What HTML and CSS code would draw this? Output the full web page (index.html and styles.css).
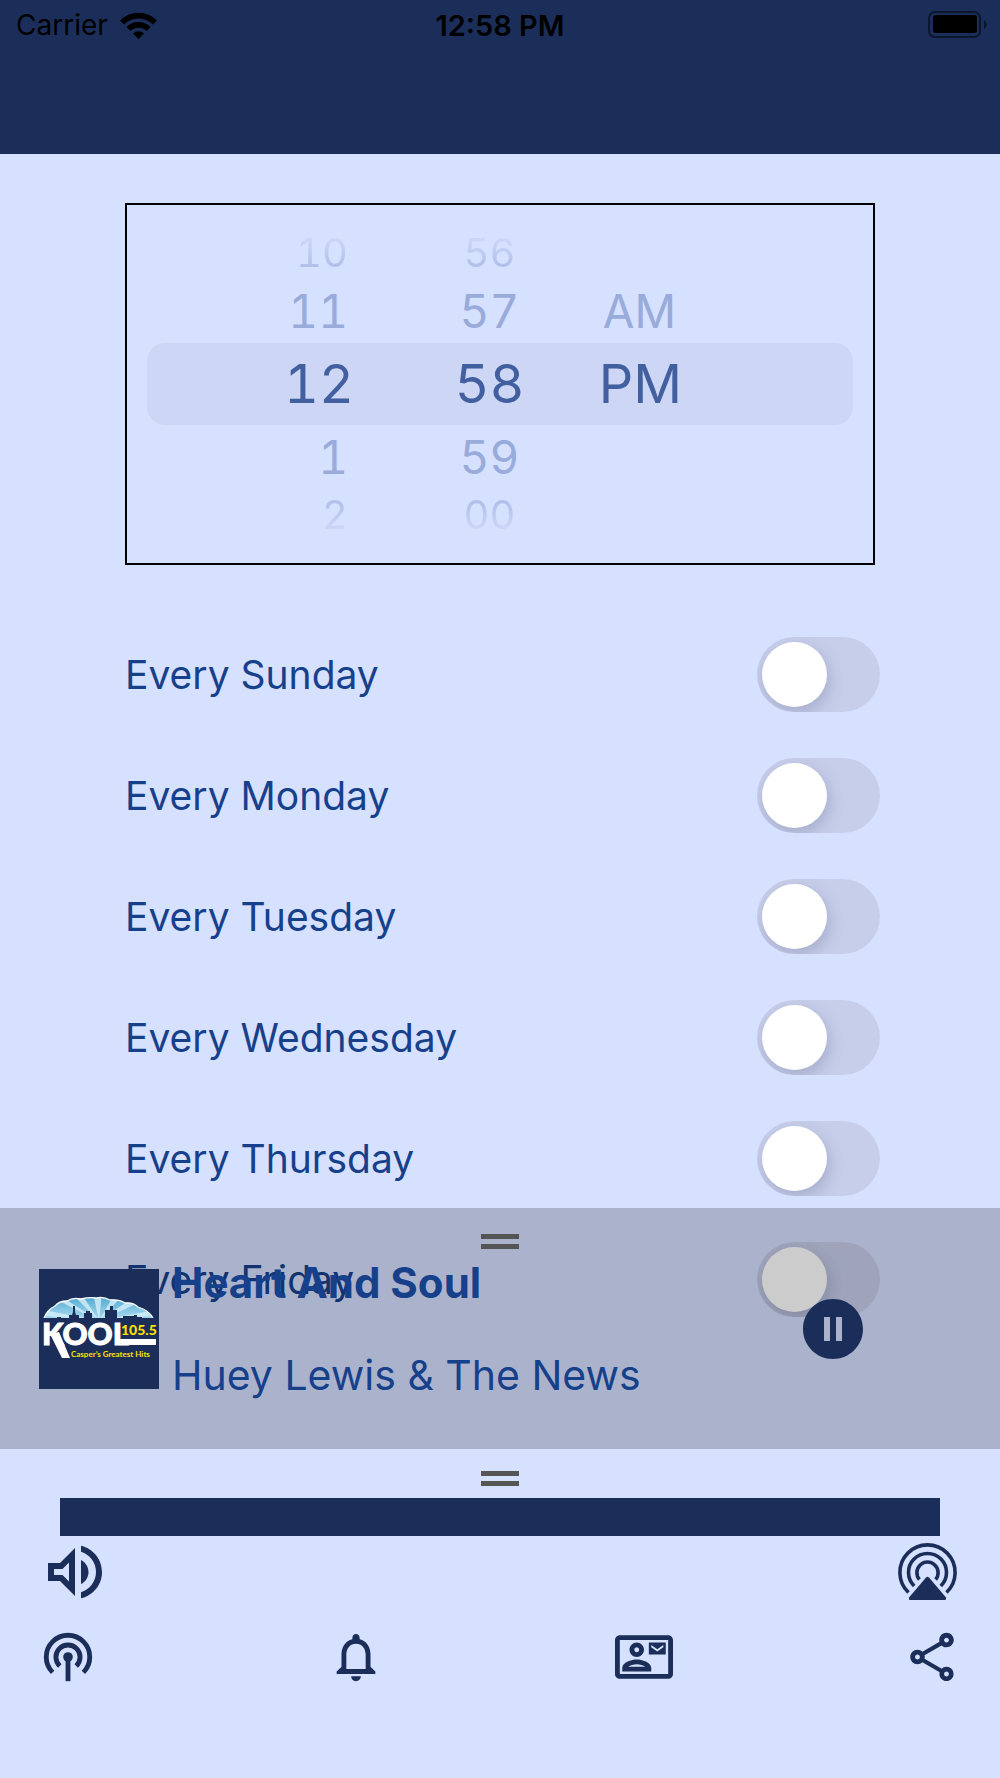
FILE: index.html
```html
<!DOCTYPE html>
<html lang="en">
<head>
<meta charset="utf-8">
<meta name="viewport" content="width=device-width, initial-scale=1">
<title>Alarm</title>
<link rel="stylesheet" href="styles.css">
</head>
<body>
<div class="screen">
  <header class="topbar">
    <div class="status">
      <div class="status-left">
        <span>Carrier</span>
        <svg class="wifi" viewBox="0 0 37 27" aria-hidden="true">
          <path d="M0 8.500A26 26 0 0 1 37 8.500L33 12.500A20.500 20.500 0 0 0 4 12.500Z"/>
          <path d="M6.500 15A17 17 0 0 1 30.500 15L26.500 19A11.500 11.500 0 0 0 10.500 19Z"/>
          <path d="M13 21.500A8 8 0 0 1 24 21.500L18.500 27Z"/>
        </svg>
      </div>
      <span class="clock">12:58 PM</span>
      <svg class="battery" viewBox="0 0 60 28" aria-hidden="true">
        <rect x="1" y="1" width="51" height="25" rx="6" fill="none" stroke="#0d172c" stroke-width="2"/>
        <rect x="5" y="4" width="44" height="18" rx="3"/>
        <path d="M56 9Q59 11 59 13.500T56 18Z" fill="#0d172c"/>
      </svg>
    </div>
  </header>

  <div class="stage">
    <main class="settings">
      <div class="picker">
        <div class="wheel hours" role="listbox" aria-label="Hour">
          <button class="far" role="option">10</button>
          <button class="near" role="option">11</button>
          <button class="current" role="option" aria-selected="true">12</button>
          <button class="near" role="option">1</button>
          <button class="far low" role="option">2</button>
        </div>
        <div class="wheel minutes" role="listbox" aria-label="Minute">
          <button class="far" role="option">56</button>
          <button class="near" role="option">57</button>
          <button class="current" role="option" aria-selected="true">58</button>
          <button class="near" role="option">59</button>
          <button class="far low" role="option">00</button>
        </div>
        <div class="wheel period" role="listbox" aria-label="AM or PM">
          <span></span>
          <button class="near" role="option">AM</button>
          <button class="current" role="option" aria-selected="true">PM</button>
        </div>
      </div>

      <div class="days">
        <label class="day"><span>Every Sunday</span><input type="checkbox" role="switch"></label>
        <label class="day"><span>Every Monday</span><input type="checkbox" role="switch"></label>
        <label class="day"><span>Every Tuesday</span><input type="checkbox" role="switch"></label>
        <label class="day"><span>Every Wednesday</span><input type="checkbox" role="switch"></label>
        <label class="day"><span>Every Thursday</span><input type="checkbox" role="switch"></label>
        <label class="day"><span>Every Friday</span><input type="checkbox" role="switch"></label>
      </div>
    </main>

    <section class="player" aria-label="Now playing">
      <div class="handle"></div>
      <div class="track">
        <svg class="logo" viewBox="0 0 120 120" role="img" aria-label="Kool 105.5">
          <defs>
            <linearGradient id="sky" x1="0" y1="0" x2="0" y2="1">
              <stop offset="0" stop-color="#4ba5cf"/>
              <stop offset="1" stop-color="#a9dcf0"/>
            </linearGradient>
            <clipPath id="dome"><path d="M5 49Q8 41 16 37Q20 32 28 32Q34 28 42 30Q50 28 57 29Q64 27 71 31Q80 30 86 34Q94 33 99 38Q111 42 114 49Z"/></clipPath>
          </defs>
          <rect width="120" height="120" fill="#1b2e59"/>
          <g clip-path="url(#dome)">
            <rect y="26" width="120" height="24" fill="url(#sky)"/>
            <path fill="#d4eff9" opacity=".8" d="M60 52L0 40V46ZM60 52L8 26H20ZM60 52L32 24H42ZM60 52L54 24H63ZM60 52L76 24H86ZM60 52L98 26L108 30ZM60 52L120 40V46Z"/>
          </g>
          <path d="M5 49Q8 41 16 37Q20 32 28 32Q34 28 42 30Q50 28 57 29Q64 27 71 31Q80 30 86 34Q94 33 99 38Q111 42 114 49" fill="none" stroke="#fff" stroke-width="1.300"/>
          <path fill="#1b2e59" d="M5 51V49H18V48H22V49H30V46H33L34 43V37H36V43L37 46H40V49H45V44H47V42H51V44H53V49H66V41H71V37H74V41H78V49H84V47H95V46H98V48H103V49H115V51Z"/>
          <path fill="#fff" d="M11 65L20 63L31 89H23ZM80 70H117V76H80Z"/>
          <text x="3" y="76" class="logo-name">KOOL</text>
          <text x="82" y="66" class="logo-freq">105.5</text>
          <text x="32" y="88" class="logo-tag">Casper’s Greatest Hits</text>
        </svg>
        <div class="track-text">
          <h2>Heart And Soul</h2>
          <p>Huey Lewis &amp; The News</p>
        </div>
        <button class="pause" aria-label="Pause">
          <svg viewBox="0 0 24 24"><path d="M12 2C6.480 2 2 6.480 2 12s4.480 10 10 10 10-4.480 10-10S17.520 2 12 2zm-1 14H9V8h2v8zm4 0h-2V8h2v8z"/></svg>
        </button>
      </div>
    </section>
  </div>

  <footer class="controls">
    <div class="handle"></div>
    <div class="banner"></div>
    <div class="audio-row">
      <button aria-label="Volume">
        <svg viewBox="0 0 24 24"><path d="M3 9v6h4l5 5V4L7 9H3zm7-.17v6.340L7.830 13H5v-2h2.830L10 8.830zM16.500 12c0-1.770-1.020-3.290-2.500-4.030v8.050c1.480-.73 2.500-2.250 2.500-4.020zM14 3.230v2.060c2.890.86 5 3.540 5 6.710s-2.110 5.850-5 6.710v2.060c4.010-.91 7-4.490 7-8.770s-2.990-7.860-7-8.770z"/></svg>
      </button>
      <button aria-label="AirPlay">
        <svg viewBox="0 0 72 72">
          <g fill="none" stroke="currentColor" stroke-width="3.600">
            <path d="M19.500 56.500A27.600 27.600 0 1 1 57.500 56.500"/>
            <path d="M25.200 50A19 19 0 1 1 51.800 50"/>
            <path d="M30.400 43.500A10.600 10.600 0 1 1 46.600 43.500"/>
          </g>
          <path d="M37 41.500Q38.500 40 40 41.500L57 61.500Q57.500 64 56 64H21Q19.500 64 20 61.500Z"/>
        </svg>
      </button>
    </div>
    <nav class="tabs">
      <a href="#listen" aria-label="Listen">
        <svg viewBox="0 0 24 24">
          <g fill="none" stroke="currentColor" stroke-width="2">
            <path d="M5.640 18.360A9 9 0 1 1 18.360 18.360"/>
            <path d="M8.600 15.700A5 5 0 1 1 15.400 15.700"/>
          </g>
          <circle cx="12" cy="12" r="2"/><path d="M11 12h2v10h-2z"/>
        </svg>
      </a>
      <a href="#alerts" aria-label="Alerts">
        <svg viewBox="0 0 24 24"><path d="M12 22c1.100 0 2-.9 2-2h-4c0 1.100.9 2 2 2zm6-6v-5c0-3.070-1.630-5.640-4.500-6.320V4c0-.83-.67-1.500-1.500-1.500s-1.500.67-1.500 1.500v.68C7.640 5.360 6 7.920 6 11v5l-2 2v1h16v-1l-2-2zm-2 1H8v-6c0-2.480 1.510-4.500 4-4.500s4 2.020 4 4.500v6z"/></svg>
      </a>
      <a href="#contact" aria-label="Contact">
        <svg viewBox="0 0 24 24"><path d="M22 3H2C.9 3 0 3.900 0 5v14c0 1.100.9 2 2 2h20c1.100 0 1.990-.9 1.990-2L24 5c0-1.100-.9-2-2-2zm0 16H2V5h20v14zM21 6h-7v5h7V6zm-1 2l-2.500 1.750L15 8V7l2.500 1.750L20 7v1zM9 12c1.650 0 3-1.350 3-3s-1.350-3-3-3-3 1.350-3 3 1.350 3 3 3zm0-4c.55 0 1 .45 1 1s-.45 1-1 1-1-.45-1-1 .45-1 1-1zm6 8.590c0-2.500-3.970-3.580-6-3.580s-6 1.080-6 3.580V18h12v-1.410zM5.480 16c.74-.5 2.220-1 3.520-1s2.770.49 3.520 1H5.480z"/></svg>
      </a>
      <a href="#share" aria-label="Share">
        <svg viewBox="0 0 24 24"><path d="M18 16.080c-.76 0-1.440.3-1.960.77L8.910 12.700c.05-.23.09-.46.09-.7s-.04-.47-.09-.7l7.050-4.110c.54.5 1.250.81 2.040.81 1.660 0 3-1.340 3-3s-1.340-3-3-3-3 1.340-3 3c0 .24.04.47.09.7L8.040 9.810C7.500 9.310 6.790 9 6 9c-1.660 0-3 1.340-3 3s1.340 3 3 3c.79 0 1.500-.31 2.040-.81l7.120 4.160c-.05.21-.08.43-.08.65 0 1.610 1.310 2.920 2.920 2.920s2.920-1.310 2.920-2.920-1.310-2.920-2.920-2.920zM18 4c.55 0 1 .45 1 1s-.45 1-1 1-1-.45-1-1 .45-1 1-1zM6 13c-.55 0-1-.45-1-1s.45-1 1-1 1 .45 1 1-.45 1-1 1zm12 7.020c-.55 0-1-.45-1-1s.45-1 1-1 1 .45 1 1-.45 1-1 1z"/></svg>
      </a>
    </nav>
  </footer>
</div>
</body>
</html>
```

FILE: styles.css
```css
:root {
  --navy: #1b2e59;
  --blue: #17408b;
  --page: #d6e0ff;
}

* { box-sizing: border-box; }

body {
  margin: 0;
  background: var(--page);
  color: var(--blue);
  font-family: Inter, "Liberation Sans", sans-serif;
}

button {
  padding: 0;
  border: 0;
  background: none;
  color: inherit;
  font: inherit;
  cursor: pointer;
}

svg { display: block; fill: currentColor; }

.screen {
  display: flex;
  flex-direction: column;
  min-height: 100vh;
}

/* Status bar and header */
.topbar {
  height: 154px;
  background: var(--navy);
  color: #000;
}

.status {
  display: grid;
  grid-template-columns: 1fr auto 1fr;
  align-items: center;
  height: 50px;
  padding: 0 12px;
  font-size: 28px;
}

.status-left {
  display: flex;
  align-items: center;
  gap: 12px;
  padding-left: 4px;
}

.wifi { width: 37px; height: 27px; }
.clock { font-size: 29px; font-weight: 600; }
.battery { width: 60px; height: 28px; justify-self: end; }

/* The player lies over the bottom of the settings */
.stage {
  flex: 1;
  display: grid;
}

.settings, .player { grid-area: 1 / 1; }

.settings { padding: 49px 12% 0 12.5%; }

/* Time picker */
.picker {
  display: grid;
  grid-template-columns: 33fr 31fr 36fr;
  margin-right: 5px;
  padding: 22px 20px;
  border: 2px solid #000;
}

.wheel {
  display: grid;
  grid-template-rows: 52px 64px 82px 64px 52px;
  font-variant-numeric: tabular-nums;
}

.wheel button { line-height: 1; }
.hours button { padding-right: 32px; text-align: right; }
.hours .current { padding-right: 26px; }
.period button { text-align: left; }
.period .near { padding-left: 4px; }

.far {
  font-size: 40px;
  color: transparent;
  background: linear-gradient(#cbd6f7 25%, #b0c0ea 75%);
  background-clip: text;
}

.far.low { background-image: linear-gradient(#b0c0ea 25%, #cbd6f7 75%); background-clip: text; }
.near { font-size: 46px; color: #98abda; }

.wheel .current {
  font-size: 54px;
  color: #42609f;
  background: #ced6f5;
}

.hours .current { border-radius: 18px 0 0 18px; }
.period .current { border-radius: 0 18px 18px 0; }

/* Repeat days */
.days { padding-top: 49px; }

.day {
  display: flex;
  align-items: center;
  justify-content: space-between;
  height: 121px;
  font-size: 39px;
}

.day input {
  appearance: none;
  width: 123px;
  height: 75px;
  margin: 0;
  padding: 5px;
  border-radius: 38px;
  background: #c7ceea;
  overflow: hidden;
}

.day input::before {
  content: "";
  display: block;
  width: 65px;
  height: 65px;
  border-radius: 50%;
  background: #fff;
  box-shadow: 2px 6px 16px rgba(60, 70, 110, 0.25);
}

.day input:checked { background: #34c759; }
.day input:checked::before { margin-left: auto; }

/* Now playing */
.player {
  align-self: end;
  z-index: 1;
  padding: 26px 0 47px;
  background: rgba(0, 0, 0, 0.2);
}

.handle {
  width: 38px;
  height: 15px;
  margin: 0 auto;
  border: solid #555;
  border-width: 5px 0;
}

.track {
  display: flex;
  align-items: center;
  gap: 13px;
  padding: 7px 131px 0 39px;
}

.logo { width: 120px; height: 120px; flex: none; }

.logo-name {
  font: 900 31px Lato, sans-serif;
  fill: #fff;
  stroke: #fff;
  stroke-width: 1px;
}

.logo-freq { font: 900 14px Lato, sans-serif; fill: #ffe000; }
.logo-tag { font: 700 8px Lato, sans-serif; fill: #ffe000; }

.track-text { flex: 1; min-width: 0; }

.track-text h2, .track-text p {
  margin: 0;
  font-size: 42px;
  line-height: 54px;
}

.track-text h2 { font-weight: 700; }
.track-text p { margin-top: 38px; font-size: 41px; }

.pause { color: var(--navy); }
.pause svg { width: 72px; height: 72px; }

/* Bottom controls */
.controls {
  padding: 22px 0 92px;
  color: var(--navy);
}

.banner {
  height: 38px;
  margin: 12px 6% 0;
  background: var(--navy);
}

.audio-row, .tabs {
  display: flex;
  justify-content: space-between;
  padding: 0 39px;
}

.audio-row svg { width: 72px; height: 72px; }

.tabs { margin-top: 20px; }
.tabs a { color: inherit; }
.tabs svg { width: 58px; height: 58px; }
```
